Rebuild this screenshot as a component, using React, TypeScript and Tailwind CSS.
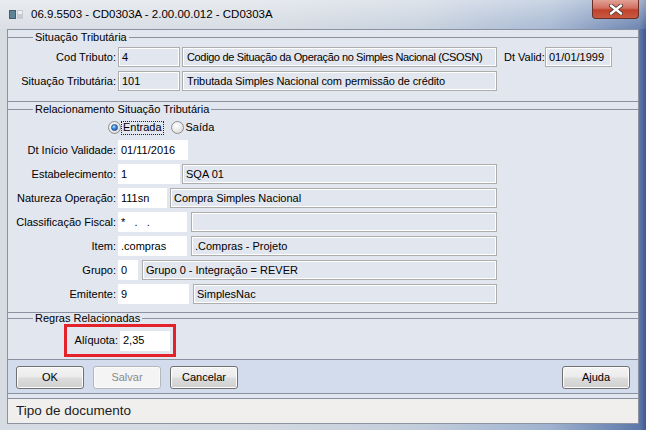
import React from "react";

const LINE = "bg-[#8a92a2]";

function Legend({ title, cls }: { title: string; cls: string }) {
  return (
    <div className={`flex items-center ${cls}`}>
      <div className={`w-[25px] h-px ${LINE}`} />
      <span className="px-[2px] leading-[13px] whitespace-nowrap">{title}</span>
      <div className={`flex-1 h-px ${LINE}`} />
    </div>
  );
}

function RO({ cls, children }: { cls: string; children?: React.ReactNode }) {
  return (
    <div
      className={`h-[20px] shrink-0 border border-[#adadad] shadow-[inset_1px_1px_0_#fff,inset_-1px_-1px_0_#fff] pl-[3px] flex items-center whitespace-pre overflow-hidden ${cls}`}
    >
      {children}
    </div>
  );
}

function ED({ cls, children }: { cls: string; children?: React.ReactNode }) {
  return (
    <div className={`h-[20px] shrink-0 bg-white pl-[3px] flex items-center whitespace-pre overflow-hidden ${cls}`}>
      {children}
    </div>
  );
}

function Label({ children }: { children: React.ReactNode }) {
  return <span className="w-[110px] shrink-0 text-right pr-[2px] whitespace-nowrap">{children}</span>;
}

function Btn({ children, disabled, cls }: { children: React.ReactNode; disabled?: boolean; cls?: string }) {
  return (
    <div
      className={`w-[68px] h-[23px] rounded-[3px] flex items-center justify-center ${
        disabled
          ? "border border-[#b4b8bd] bg-[#f4f4f4] text-[#8b8b8b] shadow-[inset_0_0_0_1px_#fbfbfb]"
          : "border border-[#707070] bg-[linear-gradient(180deg,#f4f4f4_0%,#ebebeb_48%,#dddddd_52%,#cfcfcf_100%)] text-black shadow-[inset_0_0_0_1px_#fcfcfc]"
      } ${cls ?? ""}`}
    >
      {children}
    </div>
  );
}

function Radio({ checked }: { checked?: boolean }) {
  return (
    <span className="w-[13px] h-[13px] shrink-0 rounded-full border border-[#8e8f8f] bg-[radial-gradient(circle_at_40%_35%,#ffffff_0%,#e9e9e9_50%,#cfcfcf_100%)] flex items-center justify-center">
      {checked && (
        <span className="w-[7px] h-[7px] rounded-full bg-[radial-gradient(circle_at_35%_30%,#b5e0ff_0%,#3d8ee0_45%,#174f9e_100%)] border border-[#1e4f8f]" />
      )}
    </span>
  );
}

export default function App() {
  return (
    <div className="w-[646px] h-[430px] overflow-hidden flex flex-col bg-[linear-gradient(90deg,#d7dce3_0%,#d3d9e1_40%,#c2cddb_65%,#9fb2cf_85%,#5d78a9_99%,#3f5a8c_100%)] font-['Liberation_Sans',Arial,sans-serif] text-[11px] text-black">
      {/* Title bar */}
      <div className="h-[29px] shrink-0 flex bg-[linear-gradient(180deg,rgba(255,255,255,0.45)_0%,rgba(255,255,255,0.1)_100%)]">
        <div className="flex items-center pl-[9px] flex-1">
          <svg width="14" height="10" viewBox="0 0 14 10" className="shrink-0">
            <rect x="0" y="0" width="7" height="9" fill="#41606d" />
            <rect x="1" y="1" width="5" height="7" fill="#5f8493" />
            <rect x="8" y="0" width="6" height="9" fill="#c7ccd2" />
            <rect x="9" y="1" width="4" height="3" fill="#eef0f2" />
          </svg>
          <span className="ml-[8px] text-[11.5px] text-black whitespace-nowrap">
            06.9.5503 - CD0303A - 2.00.00.012 - CD0303A
          </span>
        </div>
        <div className="w-[47px] h-[19px] mr-[7px] rounded-b-[4px] border border-t-0 border-[#6b2e28] bg-[linear-gradient(180deg,#e2a197_0%,#d0705f_45%,#c0432c_55%,#c75a3f_100%)] flex items-center justify-center">
          <svg width="14" height="11" viewBox="0 0 14 11">
            <path d="M2 1.5 L12 9.5 M12 1.5 L2 9.5" stroke="#5b3b36" strokeWidth="4.2" strokeLinecap="round" />
            <path d="M2 1.5 L12 9.5 M12 1.5 L2 9.5" stroke="#ffffff" strokeWidth="2.4" strokeLinecap="round" />
          </svg>
        </div>
      </div>

      {/* Content */}
      <div className="ml-[7px] w-[632px] h-[395px] shrink-0 border-x border-[#8a92a2] bg-[#e2e6ef] flex flex-col">
        {/* Panel 1 */}
        <div className="h-[73px] shrink-0 border-y border-[#8a92a2] flex flex-col">
          <Legend title="Situação Tributária" cls="h-[15px]" />
          <div className="mt-[2px] flex items-center h-[20px]">
            <Label>Cod Tributo:</Label>
            <RO cls="w-[62px]">4</RO>
            <RO cls="ml-[2px] w-[315px] pl-[4px] tracking-[-0.35px]">
              Codigo de Situação da Operação no Simples Nacional (CSOSN)
            </RO>
            <span className="ml-[7px] w-[38px] whitespace-nowrap">Dt Valid:</span>
            <RO cls="ml-[3px] w-[67px]">01/01/1999</RO>
          </div>
          <div className="mt-[4px] flex items-center h-[20px]">
            <Label>Situação Tributária:</Label>
            <RO cls="w-[62px]">101</RO>
            <RO cls="ml-[2px] w-[315px] pl-[4px] tracking-[-0.1px]">
              Tributada Simples Nacional com permissão de crédito
            </RO>
          </div>
        </div>

        {/* Panel 2 */}
        <div className="h-[211px] shrink-0 border-b border-[#8a92a2] flex flex-col">
          <Legend title="Relacionamento Situação Tributária" cls="h-[14px]" />
          <div className="mt-[4px] h-[15px] flex items-center pl-[100px]">
            <Radio checked />
            <span className="h-[14px] border border-dotted border-[#222] flex items-center px-[1px]">
              Entrada
            </span>
            <span className="ml-[7px]">
              <Radio />
            </span>
            <span className="ml-[2px]">Saída</span>
          </div>
          <div className="mt-[5px] flex flex-col gap-[4px]">
            <div className="flex items-center h-[20px]">
              <Label>Dt Início Validade:</Label>
              <ED cls="w-[70px]">01/11/2016</ED>
            </div>
            <div className="flex items-center h-[20px]">
              <Label>Estabelecimento:</Label>
              <ED cls="w-[62px]">1</ED>
              <RO cls="ml-[2px] w-[315px]">SQA 01</RO>
            </div>
            <div className="flex items-center h-[20px]">
              <Label>Natureza Operação:</Label>
              <ED cls="w-[49px]">111sn</ED>
              <RO cls="ml-[3px] w-[327px]">Compra Simples Nacional</RO>
            </div>
            <div className="flex items-center h-[20px]">
              <Label>Classificação Fiscal:</Label>
              <ED cls="w-[69px]">{"*   .   ."}</ED>
              <RO cls="ml-[4px] w-[306px]"></RO>
            </div>
            <div className="flex items-center h-[20px]">
              <Label>Item:</Label>
              <ED cls="w-[69px]">.compras</ED>
              <RO cls="ml-[4px] w-[306px]">.Compras - Projeto</RO>
            </div>
            <div className="flex items-center h-[20px]">
              <Label>Grupo:</Label>
              <ED cls="w-[20px]">0</ED>
              <RO cls="ml-[4px] w-[355px]">Grupo 0 - Integração = REVER</RO>
            </div>
            <div className="flex items-center h-[20px]">
              <Label>Emitente:</Label>
              <ED cls="w-[71px]">9</ED>
              <RO cls="ml-[4px] w-[304px]">SimplesNac</RO>
            </div>
          </div>
        </div>

        {/* Panel 3 */}
        <div className="h-[47px] shrink-0 border-b border-[#8a92a2] flex flex-col">
          <Legend title="Regras Relacionadas" cls="h-[11px]" />
          <div className="ml-[56px] w-[112px] h-[33px] border-[3px] border-[#e3222a] flex items-center justify-end pr-[3px]">
            <span className="whitespace-nowrap mr-[2px]">Alíquota:</span>
            <ED cls="w-[50px]">2,35</ED>
          </div>
        </div>

        {/* Button bar */}
        <div className="h-[34px] shrink-0 border-b border-[#8a92a2] bg-[#d3dcec] flex items-center px-[8px] pt-[1px]">
          <Btn>OK</Btn>
          <Btn disabled cls="ml-[9px]">Salvar</Btn>
          <Btn cls="ml-[9px]">Cancelar</Btn>
          <div className="flex-1" />
          <Btn>Ajuda</Btn>
        </div>

        <div className="h-[4px] shrink-0" />

        {/* Status bar */}
        <div className="h-[26px] shrink-0 border-y border-[#8a92a2] bg-[#f0efed] flex items-center pl-[8px] text-[13.5px] text-[#1b1b1b]">
          Tipo de documento
        </div>
      </div>

      <div className="flex-1" />
    </div>
  );
}
